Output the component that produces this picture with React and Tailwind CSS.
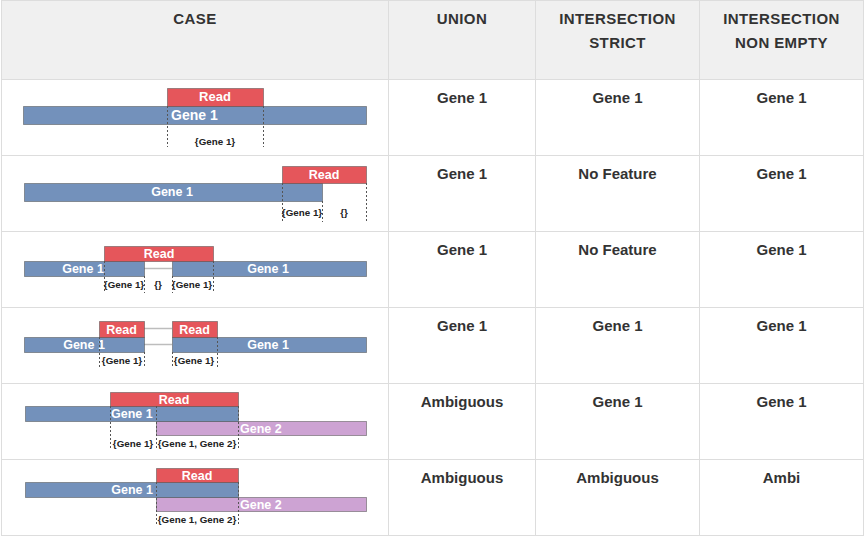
import React from "react";

const RED = "#e5565b";
const BLUE = "#7391bb";
const PURPLE = "#cda3d3";

// simple drawing helpers for the case diagrams (page coords, viewBox shifts them)
const Box = ({ x1, x2, y1, y2, fill }) => (
  <rect
    x={x1 + 0.5}
    y={y1 + 0.5}
    width={x2 - x1}
    height={y2 - y1}
    fill={fill}
    stroke="#4a4a4a"
    strokeOpacity="0.5"
    strokeWidth="1"
  />
);

const Dash = ({ x, y1, y2 }) => (
  <line x1={x + 0.5} x2={x + 0.5} y1={y1} y2={y2} stroke="#555" strokeWidth="1" strokeDasharray="2 2" />
);

const Link = ({ x1, x2, y }) => (
  <line x1={x1} x2={x2} y1={y + 0.5} y2={y + 0.5} stroke="#bdbdbd" strokeWidth="1.5" />
);

const Name = ({ x, y, size = 12.5, anchor = "middle", children }) => (
  <text x={x} y={y} textAnchor={anchor} fontSize={size} fontWeight="700" fill="#fff">
    {children}
  </text>
);

const Tag = ({ x, y, children }) => (
  <text x={x} y={y} textAnchor="middle" fontSize="9.8" fontWeight="700" fill="#222">
    {children}
  </text>
);

const Diagram = ({ top, children }) => (
  <svg
    width="386"
    height="75"
    viewBox={`2 ${top} 386 75`}
    style={{ fontFamily: '"Liberation Sans", Arial, sans-serif' }}
    className="block"
  >
    {children}
  </svg>
);

const cases = [
  {
    union: "Gene 1",
    strict: "Gene 1",
    nonEmpty: "Gene 1",
    draw: (
      <Diagram top={80}>
        <Box x1={23} x2={366} y1={106} y2={124} fill={BLUE} />
        <Box x1={167} x2={263} y1={88} y2={106} fill={RED} />
        <Name x={215} y={101} size={13}>Read</Name>
        <Name x={171} y={120} size={14} anchor="start">Gene 1</Name>
        <Dash x={167} y1={106} y2={147} />
        <Dash x={263} y1={106} y2={147} />
        <Tag x={215} y={145}>{"{Gene 1}"}</Tag>
      </Diagram>
    ),
  },
  {
    union: "Gene 1",
    strict: "No Feature",
    nonEmpty: "Gene 1",
    draw: (
      <Diagram top={156}>
        <Box x1={24} x2={322} y1={183} y2={201} fill={BLUE} />
        <Box x1={282} x2={366} y1={166} y2={183} fill={RED} />
        <Name x={324} y={179}>Read</Name>
        <Name x={172} y={196}>Gene 1</Name>
        <Dash x={282} y1={183} y2={222} />
        <Dash x={322} y1={201} y2={222} />
        <Dash x={366} y1={183} y2={222} />
        <Tag x={302} y={216}>{"{Gene 1}"}</Tag>
        <Tag x={344} y={216}>{"{}"}</Tag>
      </Diagram>
    ),
  },
  {
    union: "Gene 1",
    strict: "No Feature",
    nonEmpty: "Gene 1",
    draw: (
      <Diagram top={232}>
        <Link x1={144} x2={172} y={268} />
        <Box x1={24} x2={144} y1={261} y2={276} fill={BLUE} />
        <Box x1={172} x2={366} y1={261} y2={276} fill={BLUE} />
        <Box x1={104} x2={213} y1={246} y2={261} fill={RED} />
        <Name x={159} y={258}>Read</Name>
        <Name x={83} y={273}>Gene 1</Name>
        <Name x={268} y={273}>Gene 1</Name>
        <Dash x={104} y1={261} y2={293} />
        <Dash x={144} y1={276} y2={293} />
        <Dash x={172} y1={276} y2={293} />
        <Dash x={213} y1={261} y2={293} />
        <Tag x={124} y={288}>{"{Gene 1}"}</Tag>
        <Tag x={158} y={288}>{"{}"}</Tag>
        <Tag x={192} y={288}>{"{Gene 1}"}</Tag>
      </Diagram>
    ),
  },
  {
    union: "Gene 1",
    strict: "Gene 1",
    nonEmpty: "Gene 1",
    draw: (
      <Diagram top={308}>
        <Link x1={144} x2={172} y={328} />
        <Link x1={144} x2={172} y={344} />
        <Box x1={24} x2={144} y1={337} y2={352} fill={BLUE} />
        <Box x1={172} x2={366} y1={337} y2={352} fill={BLUE} />
        <Box x1={99} x2={144} y1={321} y2={337} fill={RED} />
        <Box x1={172} x2={217} y1={321} y2={337} fill={RED} />
        <Name x={121.5} y={334}>Read</Name>
        <Name x={194.5} y={334}>Read</Name>
        <Name x={84} y={349}>Gene 1</Name>
        <Name x={268} y={349}>Gene 1</Name>
        <Dash x={99} y1={337} y2={368} />
        <Dash x={144} y1={352} y2={368} />
        <Dash x={172} y1={352} y2={368} />
        <Dash x={217} y1={337} y2={368} />
        <Tag x={122} y={364}>{"{Gene 1}"}</Tag>
        <Tag x={194} y={364}>{"{Gene 1}"}</Tag>
      </Diagram>
    ),
  },
  {
    union: "Ambiguous",
    strict: "Gene 1",
    nonEmpty: "Gene 1",
    draw: (
      <Diagram top={384}>
        <Box x1={156} x2={366} y1={421} y2={435} fill={PURPLE} />
        <Box x1={25} x2={238} y1={406} y2={421} fill={BLUE} />
        <Box x1={110} x2={238} y1={392} y2={406} fill={RED} />
        <Name x={174} y={404}>Read</Name>
        <Name x={111} y={418} anchor="start">Gene 1</Name>
        <Name x={240} y={432.5} anchor="start">Gene 2</Name>
        <Dash x={110} y1={406} y2={448} />
        <Dash x={156} y1={406} y2={448} />
        <Dash x={238} y1={406} y2={448} />
        <Tag x={133} y={447}>{"{Gene 1}"}</Tag>
        <Tag x={197} y={447}>{"{Gene 1, Gene 2}"}</Tag>
      </Diagram>
    ),
  },
  {
    union: "Ambiguous",
    strict: "Ambiguous",
    nonEmpty: "Ambi",
    draw: (
      <Diagram top={460}>
        <Box x1={156} x2={366} y1={497} y2={511} fill={PURPLE} />
        <Box x1={25} x2={238} y1={482} y2={497} fill={BLUE} />
        <Box x1={156} x2={238} y1={468} y2={482} fill={RED} />
        <Name x={197} y={480}>Read</Name>
        <Name x={153} y={494} anchor="end">Gene 1</Name>
        <Name x={240} y={508.5} anchor="start">Gene 2</Name>
        <Dash x={156} y1={482} y2={524} />
        <Dash x={238} y1={482} y2={524} />
        <Tag x={197} y={523}>{"{Gene 1, Gene 2}"}</Tag>
      </Diagram>
    ),
  },
];

const headCell = "h-[79px] border-r border-b border-[#dddddd] bg-[#f0f0f0] pt-[6px] text-center text-[15px] leading-6 font-bold tracking-[0.4px] text-[#333]";
const bodyCell = "h-[76px] border-r border-b border-[#dddddd] bg-white pt-[6px] text-center text-[15px] leading-6 font-bold text-[#333]";

export default function App() {
  return (
    <div className="min-h-screen bg-white font-['Liberation_Sans',Arial,sans-serif]">
      <div className="ml-px grid w-[863px] grid-cols-[387px_147px_164px_164px] border-t border-l border-[#dddddd]">
        <div className={headCell}>CASE</div>
        <div className={headCell}>UNION</div>
        <div className={headCell}>
          INTERSECTION
          <br />
          STRICT
        </div>
        <div className={headCell}>
          INTERSECTION
          <br />
          NON EMPTY
        </div>

        {cases.map((c, i) => (
          <React.Fragment key={i}>
            <div className="h-[76px] border-r border-b border-[#dddddd] bg-white">{c.draw}</div>
            <div className={bodyCell}>{c.union}</div>
            <div className={bodyCell}>{c.strict}</div>
            <div className={bodyCell}>{c.nonEmpty}</div>
          </React.Fragment>
        ))}
      </div>
    </div>
  );
}
